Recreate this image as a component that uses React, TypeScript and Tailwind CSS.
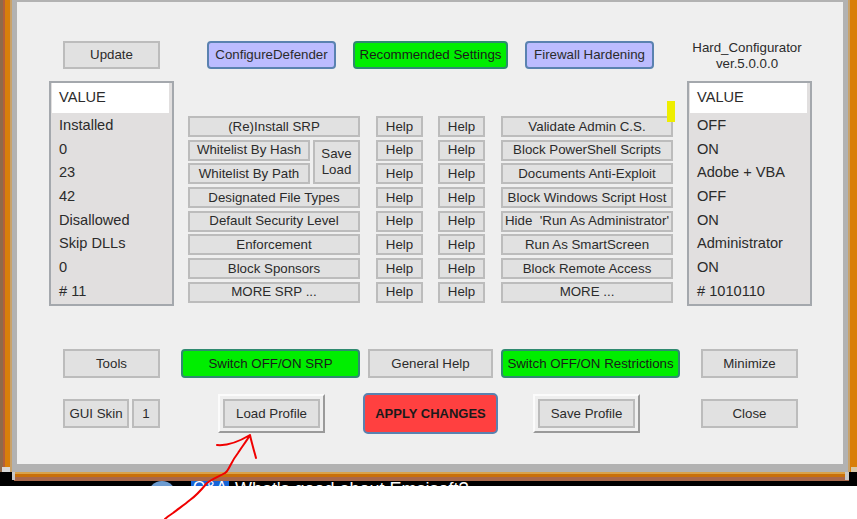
const leftValues = ['Installed', '0', '23', '42', 'Disallowed', 'Skip DLLs', '0', '# 11'];
const rightValues = ['OFF', 'ON', 'Adobe + VBA', 'OFF', 'ON', 'Administrator', 'ON', '# 1010110'];
const leftButtons = ['(Re)Install SRP', null, null, 'Designated File Types', 'Default Security Level', 'Enforcement', 'Block Sponsors', 'MORE SRP ...'];
const rightButtons = [
  'Validate Admin C.S.',
  'Block PowerShell Scripts',
  'Documents Anti-Exploit',
  'Block Windows Script Host',
  "Hide  'Run As Administrator'",
  'Run As SmartScreen',
  'Block Remote Access',
  'MORE ...',
];

const flat = 'flex items-center justify-center border-2 border-[#bcbcbc] bg-[#e1e1e1] text-[#2b2b2b] text-[13.3px] whitespace-pre';
const blue = 'flex items-center justify-center rounded-[4px] border-2 border-[#5a82b0] bg-[#bcbcff] text-[#2b2b2b] text-[13.3px] whitespace-nowrap';
const green = 'flex items-center justify-center rounded-[4px] border-2 border-[#2f8a70] bg-[#00ee00] text-[#1a1a1a] text-[13.3px] whitespace-nowrap';

function ValueBox({ values }: { values: string[] }) {
  return (
    <div className="w-[125px] h-[225px] shrink-0 border-2 border-[#a4a8ad] bg-[#e1dfdf] pl-[1px] pr-[3px]">
      <div className="h-[30px] bg-white pl-[7px] flex items-center text-[14.6px] text-[#2b2b2b]">VALUE</div>
      <div className="pl-[7px] pt-[1px]">
        {values.map((v, i) => (
          <div key={i} className="h-[23.7px] flex items-center text-[14.6px] text-[#2b2b2b] whitespace-pre">
            {v}
          </div>
        ))}
      </div>
    </div>
  );
}

function Raised({ label, className }: { label: string; className: string }) {
  return (
    <div className={`h-[39px] w-[107px] border-2 border-t-[#fbfbfb] border-l-[#fbfbfb] border-r-[#9a9a9a] border-b-[#9a9a9a] p-[3px] ${className}`}>
      <div className={`${flat} h-full`}>{label}</div>
    </div>
  );
}

function HelpColumn({ className }: { className: string }) {
  return (
    <div className={`mt-[35px] flex flex-col gap-[2.7px] ${className}`}>
      {leftButtons.map((_, i) => (
        <div key={i} className={`${flat} w-[47px] h-[21px]`}>Help</div>
      ))}
    </div>
  );
}

export default function App() {
  return (
    <div className="relative w-[857px] h-[519px] bg-white overflow-hidden font-['Liberation_Sans',sans-serif]">
      <div className="flex h-[472px]">
        {/* left frame */}
        <div className="w-[3px] bg-[#8f6a4a]" />
        <div className="w-[2px] bg-[#b5603a]" />
        <div className="w-[5px] bg-[#d97f0a]" />
        <div className="w-[2px] bg-[#c9a26a]" />

        <div className="flex-1 flex flex-col border-[5px] border-[#b2b2b2] border-t-[2px] border-b-[8px] bg-[#efefef]">
          {/* top row */}
          <div className="flex items-start pl-[46px] pt-[39px] h-[79px] shrink-0">
            <div className={`${flat} w-[97px] h-[28px]`}>Update</div>
            <div className={`${blue} ml-[47px] w-[129px] h-[28px]`}>ConfigureDefender</div>
            <div className={`${green} ml-[17px] w-[155px] h-[28px]`}>Recommended Settings</div>
            <div className={`${blue} ml-[17px] w-[129px] h-[28px]`}>Firewall Hardening</div>
            <div className="ml-[33px] w-[120px] -mt-[1px] text-center text-[13.3px] leading-[16px] text-[#2b2b2b]">
              Hard_Configurator
              <br />
              ver.5.0.0.0
            </div>
          </div>

          {/* main area */}
          <div className="flex items-start pl-[32px]">
            <ValueBox values={leftValues} />
            <div className="ml-[14px] mt-[35px] flex flex-col gap-[2.7px]">
              {leftButtons.map((label, i) => {
                if (label === null && i === 1) {
                  return (
                    <div key={i} className="flex gap-[3px] h-[44.7px]">
                      <div className="flex flex-col gap-[2.7px] w-[122px]">
                        <div className={`${flat} h-[21px]`}>Whitelist By Hash</div>
                        <div className={`${flat} h-[21px]`}>Whitelist By Path</div>
                      </div>
                      <div className={`${flat} w-[47px] h-full leading-[16px] text-center`}>
                        Save
                        {'\n'}
                        Load
                      </div>
                    </div>
                  );
                }
                if (label === null) return null;
                return (
                  <div key={i} className={`${flat} w-[172px] h-[21px]`}>
                    {label}
                  </div>
                );
              })}
            </div>
            <HelpColumn className="ml-[16px]" />
            <HelpColumn className="ml-[15px]" />
            <div className="ml-[16px] mt-[35px] flex flex-col gap-[2.7px]">
              {rightButtons.map((label, i) => (
                <div key={i} className={`${flat} w-[172px] h-[21px]`}>{label}</div>
              ))}
            </div>
            <div className="ml-[14px]">
              <ValueBox values={rightValues} />
            </div>
          </div>

          {/* bottom rows */}
          <div className="flex items-start pl-[46px] mt-[43px]">
            <div className={`${flat} w-[97px] h-[29px]`}>Tools</div>
            <div className={`${green} ml-[21px] w-[179px] h-[29px]`}>Switch OFF/ON SRP</div>
            <div className={`${flat} ml-[8px] w-[125px] h-[29px]`}>General Help</div>
            <div className={`${green} ml-[8px] w-[179px] h-[29px]`}>Switch OFF/ON Restrictions</div>
            <div className={`${flat} ml-[21px] w-[97px] h-[29px]`}>Minimize</div>
          </div>
          <div className="flex items-center pl-[46px] mt-[15px] h-[41px]">
            <div className={`${flat} w-[66px] h-[29px]`}>GUI Skin</div>
            <div className={`${flat} ml-[3px] w-[28px] h-[29px]`}>1</div>
            <Raised label="Load Profile" className="ml-[58px]" />
            <div className="ml-[38px] w-[135px] h-[41px] flex items-center justify-center rounded-[5px] border-2 border-[#5a82b0] bg-[#ff4040] text-[13px] font-bold text-[#1a1a1a]">APPLY CHANGES</div>
            <Raised label="Save Profile" className="ml-[35px]" />
            <div className={`${flat} ml-[61px] w-[97px] h-[29px]`}>Close</div>
          </div>
        </div>

        {/* right frame */}
        <div className="w-[2px] bg-[#c9a26a]" />
        <div className="w-[7px] bg-[#d97f0a]" />
      </div>

      {/* bottom frame */}
      <div className="h-[14px] bg-black">
        <div className="flex flex-col h-[9px] ml-[14px] mr-[8px]">
          <div className="h-[2px] bg-[#d9a24a]" />
          <div className="h-[3px] bg-[#c9700a]" />
          <div className="h-[4px] bg-[#a8674a]" />
        </div>
        <div className="h-[5px] overflow-hidden">
          <div className="flex items-start pl-[148px]">
            <div className="w-[28px] h-[28px] rounded-full bg-[#6c9bd0]" />
            <div className="ml-[15px] w-[38px] h-[14px] bg-[#1565d8] text-white text-[16px] leading-[14px] text-center">Q&A</div>
            <div className="ml-[6px] text-white text-[18px] leading-[16px] whitespace-pre">What's good about Emsisoft?</div>
          </div>
        </div>
      </div>

      {/* frame corners */}
      <div className="absolute left-[2px] top-[467px] w-[8px] h-[5px] bg-[#d8d8d8]" />
      <div className="absolute left-[12px] top-[472px] w-[3px] h-[8px] bg-[#c8c8c8]" />
      <div className="absolute left-[845px] top-[472px] w-[4px] h-[8px] bg-[#c8c8c8]" />
      <div className="absolute left-[851px] top-[467px] w-[6px] h-[5px] bg-[#d8c8a8]" />

      {/* highlighter mark */}
      <div className="absolute left-[667px] top-[101px] w-[8px] h-[21px] bg-[#eeee00]" />

      {/* hand drawn arrow */}
      <svg className="absolute left-0 top-0" width="857" height="519" fill="none">
        <path
          d="M217 445 C228 446 240 441 250 435 C251 440 252 443 253 447 C254 451 255 454 256 458 M250 435 C246 442 241 448 238 453 C234 458 232 462 230 466 C228 470 227 472 225 473 C218 477 212 479 207 483 C202 489 196 496 190 500 C184 505 178 509 173 513 C170 515 167 517 165 519"
          stroke="#f00000"
          strokeWidth="2"
          strokeLinecap="round"
          strokeLinejoin="round"
        />
      </svg>
    </div>
  );
}
